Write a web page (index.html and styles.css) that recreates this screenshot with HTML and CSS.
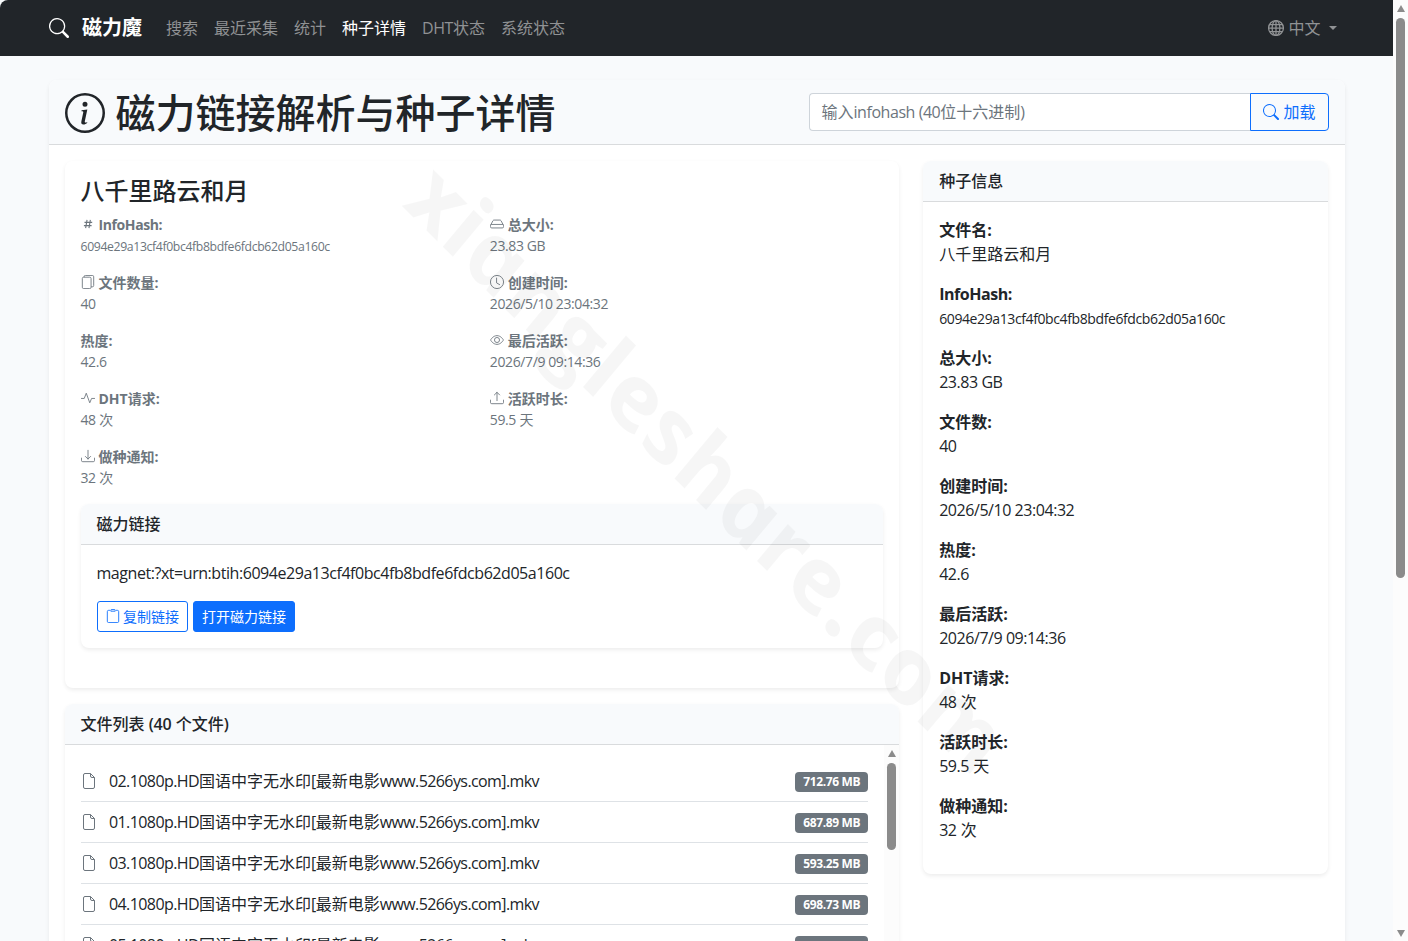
FILE: index.html
```html
<!DOCTYPE html>
<html lang="zh-CN">
<head>
  <meta charset="utf-8" />
  <title>磁力链接解析与种子详情</title>
  <link rel="stylesheet" href="styles.css">
</head>
<body>
<!-- 图标 -->
<svg class="sprite">
  <symbol id="search" viewBox="0 0 16 16"><path d="M11.742 10.344a6.5 6.5 0 1 0-1.397 1.398h-.001q.044.06.098.115l3.85 3.85a1 1 0 0 0 1.415-1.414l-3.85-3.85a1 1 0 0 0-.115-.1zM12 6.5a5.5 5.5 0 1 1-11 0 5.5 5.5 0 0 1 11 0"/></symbol>
  <symbol id="info" viewBox="0 0 16 16"><path d="M8 15A7 7 0 1 1 8 1a7 7 0 0 1 0 14m0 1A8 8 0 1 0 8 0a8 8 0 0 0 0 16"/><path d="m8.93 6.588-2.29.287-.082.38.45.083c.294.07.352.176.288.469l-.738 3.468c-.194.897.105 1.319.808 1.319.545 0 1.178-.252 1.465-.598l.088-.416c-.2.176-.492.246-.686.246-.275 0-.375-.193-.304-.533zM9 4.5a1 1 0 1 1-2 0 1 1 0 0 1 2 0"/></symbol>
  <symbol id="globe" viewBox="0 0 16 16"><g class="line bold"><circle cx="8" cy="8" r="7.4"/><ellipse cx="8" cy="8" rx="3.9" ry="7.4"/><path d="M8 .5v15M.5 8h15M1.6 4.5h12.8M1.6 11.5h12.8"/></g></symbol>
  <symbol id="hash" viewBox="0 0 16 16"><path class="line bold" d="M6.9 3.2 5.3 12.8M10.7 3.2 9.1 12.8M4 6.1h8.8M3.3 9.9h8.8"/></symbol>
  <symbol id="hdd" viewBox="0 0 16 16"><path class="line" d="M2 8.5h12a1.5 1.5 0 0 1 1.5 1.5v1a1.5 1.5 0 0 1-1.5 1.5H2A1.5 1.5 0 0 1 .5 11v-1A1.5 1.5 0 0 1 2 8.5zM.7 9.3 3.4 4.2A1.5 1.5 0 0 1 4.7 3.5h6.6a1.5 1.5 0 0 1 1.3.7l2.7 5.1"/></symbol>
  <symbol id="files" viewBox="0 0 16 16"><path class="line" d="M3 2.5h7A1.5 1.5 0 0 1 11.5 4v10a1.5 1.5 0 0 1-1.5 1.5H3A1.5 1.5 0 0 1 1.5 14V4A1.5 1.5 0 0 1 3 2.5zM3.5 2.5V2A1.5 1.5 0 0 1 5 .5h8A1.5 1.5 0 0 1 14.5 2v10a1.5 1.5 0 0 1-1.5 1.5h-1.5"/></symbol>
  <symbol id="clock" viewBox="0 0 16 16"><g class="line"><circle cx="8" cy="8" r="7.5"/><path stroke-linecap="round" d="M7.5 3.5V9l3.5 2"/></g></symbol>
  <symbol id="eye" viewBox="0 0 16 16"><g class="line"><path d="M.6 8S3.3 3 8 3s7.4 5 7.4 5-2.7 5-7.4 5S.6 8 .6 8z"/><circle cx="8" cy="8" r="2.9"/></g></symbol>
  <symbol id="activity" viewBox="0 0 16 16"><path class="line" stroke-linejoin="round" stroke-linecap="round" d="M.5 8.5h3.2L6 2.5l4 11 2.1-5h3.4"/></symbol>
  <symbol id="upload" viewBox="0 0 16 16"><path class="line" stroke-linecap="round" stroke-linejoin="round" d="M.5 10.4v2.6A1.5 1.5 0 0 0 2 14.5h12a1.5 1.5 0 0 0 1.5-1.5v-2.6M8 11V1.5M5 4.5l3-3 3 3"/></symbol>
  <symbol id="download" viewBox="0 0 16 16"><path class="line" stroke-linecap="round" stroke-linejoin="round" d="M.5 10.4v2.6A1.5 1.5 0 0 0 2 14.5h12a1.5 1.5 0 0 0 1.5-1.5v-2.6M8 1.5v10M5 8.5l3 3 3-3"/></symbol>
  <symbol id="clipboard" viewBox="0 0 16 16"><path class="line" d="M4.5 1.5H3A1.5 1.5 0 0 0 1.5 3v11A1.5 1.5 0 0 0 3 15.5h10a1.5 1.5 0 0 0 1.5-1.5V3A1.5 1.5 0 0 0 13 1.5h-1.5M6.5.5h3a1 1 0 0 1 1 1v1h-5v-1a1 1 0 0 1 1-1z"/></symbol>
  <symbol id="file" viewBox="0 0 16 16"><path class="line" d="M9.5.5H4A1.5 1.5 0 0 0 2.5 2v12A1.5 1.5 0 0 0 4 15.5h8a1.5 1.5 0 0 0 1.5-1.5V4.5L9.5.5v2.5A1.5 1.5 0 0 0 11 4.5h2.5"/></symbol>
</svg>
<div class="window">
  <div class="page">
    <nav class="navbar">
      <div class="container">
        <a class="brand"><svg class="icon"><use href="#search"/></svg>磁力魔</a>
        <ul class="nav">
          <li>搜索</li>
          <li>最近采集</li>
          <li>统计</li>
          <li class="active">种子详情</li>
          <li><span class="en">DHT</span>状态</li>
          <li>系统状态</li>
        </ul>
        <div class="lang"><svg class="icon"><use href="#globe"/></svg>中文<i class="caret"></i></div>
      </div>
    </nav>
    <div class="container main">
      <div class="card">
        <div class="card-header top">
          <h1><svg class="icon"><use href="#info"/></svg>磁力链接解析与种子详情</h1>
          <div class="input-group">
            <div class="input">输入<span class="en">infohash (40</span>位十六进制<span class="en">)</span></div>
            <button class="btn"><svg class="icon"><use href="#search"/></svg>加载</button>
          </div>
        </div>
        <div class="card-body row">
          <div class="left">
            <div class="card detail">
              <h2>八千里路云和月</h2>
              <div class="meta">
                <div><b><svg class="icon"><use href="#hash"/></svg><span class="en">InfoHash:</span></b><small class="en">6094e29a13cf4f0bc4fb8bdfe6fdcb62d05a160c</small></div>
                <div><b><svg class="icon"><use href="#hdd"/></svg>总大小:</b><span class="en">23.83 GB</span></div>
                <div><b><svg class="icon"><use href="#files"/></svg>文件数量:</b><span class="en">40</span></div>
                <div><b><svg class="icon"><use href="#clock"/></svg>创建时间:</b><span class="en">2026/5/10 23:04:32</span></div>
                <div><b>热度:</b><span class="en">42.6</span></div>
                <div><b><svg class="icon"><use href="#eye"/></svg>最后活跃:</b><span class="en">2026/7/9 09:14:36</span></div>
                <div><b><svg class="icon"><use href="#activity"/></svg>DHT请求:</b><span><span class="en">48</span> 次</span></div>
                <div><b><svg class="icon"><use href="#upload"/></svg>活跃时长:</b><span><span class="en">59.5</span> 天</span></div>
                <div><b><svg class="icon"><use href="#download"/></svg>做种通知:</b><span><span class="en">32</span> 次</span></div>
              </div>
              <div class="card magnet">
                <div class="card-header">磁力链接</div>
                <div class="card-body">
                  <p class="en">magnet:?xt=urn:btih:6094e29a13cf4f0bc4fb8bdfe6fdcb62d05a160c</p>
                  <div class="btns">
                    <button class="btn btn-sm"><svg class="icon"><use href="#clipboard"/></svg>复制链接</button>
                    <button class="btn btn-sm btn-primary">打开磁力链接</button>
                  </div>
                </div>
              </div>
            </div>
            <div class="card files">
              <div class="card-header">文件列表 <span class="count">(40</span> 个文件<span class="count">)</span></div>
              <div class="file-scroll">
                <ul class="file-list">
                  <li><svg class="icon"><use href="#file"/></svg><span class="name"><span class="en">02.1080p.HD</span>国语中字无水印<span class="en">[</span>最新电影<span class="en">www.5266ys.com].mkv</span></span><span class="badge">712.76 MB</span></li>
                  <li><svg class="icon"><use href="#file"/></svg><span class="name"><span class="en">01.1080p.HD</span>国语中字无水印<span class="en">[</span>最新电影<span class="en">www.5266ys.com].mkv</span></span><span class="badge">687.89 MB</span></li>
                  <li><svg class="icon"><use href="#file"/></svg><span class="name"><span class="en">03.1080p.HD</span>国语中字无水印<span class="en">[</span>最新电影<span class="en">www.5266ys.com].mkv</span></span><span class="badge">593.25 MB</span></li>
                  <li><svg class="icon"><use href="#file"/></svg><span class="name"><span class="en">04.1080p.HD</span>国语中字无水印<span class="en">[</span>最新电影<span class="en">www.5266ys.com].mkv</span></span><span class="badge">698.73 MB</span></li>
                  <li><svg class="icon"><use href="#file"/></svg><span class="name"><span class="en">05.1080p.HD</span>国语中字无水印<span class="en">[</span>最新电影<span class="en">www.5266ys.com].mkv</span></span><span class="badge">600.68 MB</span></li>
                </ul>
                <div class="scrollbar"><i class="up"></i><i class="thumb"></i></div>
              </div>
            </div>
          </div>
          <div class="right">
            <div class="card">
              <div class="card-header">种子信息</div>
              <div class="card-body info">
                <p><b>文件名:</b>八千里路云和月</p>
                <p><b class="en">InfoHash:</b><small class="en">6094e29a13cf4f0bc4fb8bdfe6fdcb62d05a160c</small></p>
                <p><b>总大小:</b><span class="en">23.83 GB</span></p>
                <p><b>文件数:</b><span class="en">40</span></p>
                <p><b>创建时间:</b><span class="en">2026/5/10 23:04:32</span></p>
                <p><b>热度:</b><span class="en">42.6</span></p>
                <p><b>最后活跃:</b><span class="en">2026/7/9 09:14:36</span></p>
                <p><b>DHT请求:</b><span class="en">48</span> 次</p>
                <p><b>活跃时长:</b><span class="en">59.5</span> 天</p>
                <p><b>做种通知:</b><span class="en">32</span> 次</p>
              </div>
            </div>
          </div>
        </div>
      </div>
    </div>
  </div>
  <div class="scrollbar page-bar"><i class="up"></i><i class="thumb"></i><i class="down"></i></div>
  <!-- 水印 -->
  <svg class="watermark" viewBox="0 0 1408 941"><text transform="translate(405 209) rotate(45) skewX(18)" textLength="811" lengthAdjust="spacingAndGlyphs">xiangleshare.com</text></svg>
</div>
</body>
</html>
```
FILE: styles.css
```css
*{box-sizing:border-box;margin:0;padding:0;}
body{font:16px/24px "Open Sans","Noto Sans CJK SC",sans-serif;color:#212529;background:#f8fafc;}
ul{list-style:none;}
svg{display:block;}
i{display:block;}
.sprite{position:absolute;width:0;height:0;}
.line{fill:none;stroke:currentColor;stroke-width:1;}
.line.bold{stroke-width:1.25;}
.icon{width:1em;height:1em;flex:none;fill:currentColor;}
.en{letter-spacing:-0.028em;}

.window{position:relative;display:flex;height:941px;overflow:hidden;}
.page{flex:1;overflow:hidden;}
.container{width:1296px;margin:0 auto;}

/* 导航 */
.navbar{height:56px;background:#212529;border-top-left-radius:8px;}
.navbar .container{display:flex;align-items:center;height:56px;}
.brand{display:flex;align-items:center;gap:13.5px;font-size:20px;font-weight:700;color:#fff;}
.nav{display:flex;flex:1;margin-left:16px;color:#909294;}
.nav li{padding:0 8px;}
.nav .active{color:#fff;}
.lang{display:flex;align-items:center;gap:4px;padding-right:8px;color:#909294;}
.caret{margin-left:4px;border:4.8px solid transparent;border-top-color:currentColor;border-bottom:0;}

/* 卡片 */
.main{padding-top:24px;}
.card{background:#fff;border-radius:8px;box-shadow:0 2px 4px rgba(0,0,0,.075);}
.card-header{padding:8px 16px;border-bottom:1px solid #d9dbdd;border-radius:8px 8px 0 0;background:#f8fafc;font-weight:500;}
.card-body{padding:16px;}
.count{font-weight:600;letter-spacing:-.01em;}
.top{display:flex;justify-content:space-between;align-items:center;}
h1{display:flex;align-items:center;gap:11px;padding-top:2px;font-size:40px;font-weight:500;line-height:46px;}
.row{display:grid;grid-template-columns:834.67px 405.33px;gap:24px;align-items:start;}

.input-group{display:flex;width:520px;height:38px;font-weight:400;}
.input{flex:1;padding:6px 12px;border:1px solid #ced4da;border-right:0;border-radius:4px 0 0 4px;background:#fff;color:#6c757d;}
.btn{display:flex;align-items:center;gap:4px;padding:6px 12px;border:1px solid #0d6efd;border-radius:0 4px 4px 0;background:none;color:#0d6efd;font:inherit;}
.btn-sm{gap:3.4px;padding:4px 8px;border-radius:3px;font-size:14px;line-height:21px;}
.btn-primary{background:#0d6efd;color:#fff;}

.detail{padding:16px 16px 40px;margin-bottom:16px;}
h2{margin-bottom:8px;font-size:24px;font-weight:500;line-height:28.8px;}
.meta{display:grid;grid-template-columns:1fr 1fr;column-gap:16px;font-size:14px;line-height:21px;color:#6c757d;}
.meta > div{height:58px;}
.meta b{display:flex;align-items:center;}
.meta b .icon{margin-right:4px;}
.meta small{font-size:12.25px;letter-spacing:-.03em;}
.magnet p{margin-bottom:16px;}
.btns{display:flex;gap:5px;}

/* 文件列表 */
.file-scroll{display:flex;height:400px;}
.file-list{flex:1;padding:16px;}
.file-list li{display:flex;align-items:center;height:41px;border-bottom:1px solid #dee2e6;}
.file-list .icon{color:#6c757d;}
.name{flex:1;margin-left:12.5px;}
.name .en{letter-spacing:-.037em;}
.badge{padding:4px 8px;margin-top:2px;border-radius:4px;background:#6c757d;color:#fff;font-size:12px;font-weight:700;line-height:12px;letter-spacing:-.03em;}

.info p{margin-bottom:16px;}
.info b{display:block;}
.info small{font-size:14px;line-height:1;}

/* 滚动条 */
.scrollbar{display:flex;flex-direction:column;align-items:center;width:15px;padding-top:5px;background:#fcfcfc;}
.scrollbar .thumb{width:9px;height:87px;margin-top:6px;border-radius:5px;background:#8b8b8b;}
.up,.down{border:4.5px solid transparent;border-top:0;border-bottom:7px solid #8b8b8b;}
.down{margin-top:auto;margin-bottom:4px;border-top:7px solid #8b8b8b;border-bottom:0;}
.page-bar .thumb{height:560px;}

.watermark{position:absolute;left:0;top:0;width:1408px;height:941px;pointer-events:none;}
.watermark text{fill:rgba(0,0,0,.037);font:italic 700 88px "Open Sans",sans-serif;}
```
